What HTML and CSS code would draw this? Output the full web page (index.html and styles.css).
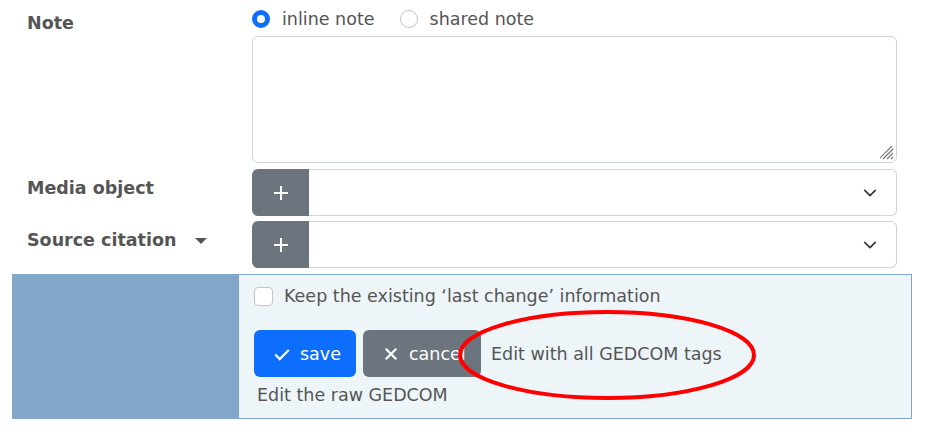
FILE: index.html
```html
<!DOCTYPE html>
<html>
<head>
<meta charset="utf-8">
<link rel="stylesheet" href="styles.css">
</head>
<body>
<div class="page">
  <div class="row row-note">
    <div class="label">Note</div>
    <div class="control">
      <div class="radios">
        <label class="radio"><span class="radio-dot checked"></span>inline note</label>
        <label class="radio"><span class="radio-dot"></span>shared note</label>
      </div>
      <div class="textarea">
        <svg class="grip" width="14" height="14" viewBox="0 0 14 14"><path d="M13 3 L3 13 M13 7 L7 13 M13 11 L11 13 M13 -1 L-1 13" stroke="#777" stroke-width="1.2"/></svg>
      </div>
    </div>
  </div>
  <div class="row row-select">
    <div class="label">Media object</div>
    <div class="control">
      <div class="input-group">
        <div class="plus"><svg width="16" height="16" viewBox="0 0 16 16"><path d="M8 1v14M1 8h14" stroke="#fff" stroke-width="2"/></svg></div>
        <div class="select"><svg width="14" height="14" viewBox="0 0 16 16"><path d="M2 5l6 6 6-6" fill="none" stroke="#343a40" stroke-width="2" stroke-linecap="round" stroke-linejoin="round"/></svg></div>
      </div>
    </div>
  </div>
  <div class="row row-select">
    <div class="label">Source citation <span class="caret"></span></div>
    <div class="control">
      <div class="input-group">
        <div class="plus"><svg width="16" height="16" viewBox="0 0 16 16"><path d="M8 1v14M1 8h14" stroke="#fff" stroke-width="2"/></svg></div>
        <div class="select"><svg width="14" height="14" viewBox="0 0 16 16"><path d="M2 5l6 6 6-6" fill="none" stroke="#343a40" stroke-width="2" stroke-linecap="round" stroke-linejoin="round"/></svg></div>
      </div>
    </div>
  </div>
  <div class="footer">
    <div class="footer-side"></div>
    <div class="footer-main">
      <label class="check"><span class="checkbox"></span>Keep the existing ‘last change’ information</label>
      <div class="buttons">
        <span class="btn btn-save"><svg width="18" height="18" viewBox="0 0 16 16"><path d="M2 8.5l4 4 8-8" fill="none" stroke="#fff" stroke-width="2"/></svg>save</span>
        <span class="btn btn-cancel"><svg width="14" height="14" viewBox="0 0 16 16"><path d="M2 2l12 12M14 2L2 14" fill="none" stroke="#fff" stroke-width="2.6"/></svg>cancel</span>
        <span class="link link-all">Edit with all GEDCOM tags</span>
      </div>
      <div class="link link-raw">Edit the raw GEDCOM</div>
      <svg class="annot" width="310" height="96" viewBox="0 0 310 96"><ellipse cx="150" cy="46" rx="147" ry="43" fill="none" stroke="#ff0000" stroke-width="4"/></svg>
    </div>
  </div>
</div>
</body>
</html>
```
FILE: styles.css
```css
* { box-sizing: border-box; }
html, body { margin: 0; padding: 0; background: #fff; }
body {
  font-family: "DejaVu Sans", Verdana, sans-serif;
  font-size: 17.5px;
  color: #555;
}
.page { padding: 8px 15px 0 12px; width: 927px; }
.row { display: grid; grid-template-columns: 226px 1fr; }
.row-select { margin-top: 6px; }
.row-select + .row-select { margin-top: 5px; }
.label {
  padding-left: 15px;
  font-weight: bold;
  font-size: 17.5px;
  color: #555;
}
.row-note .label { padding-top: 5px; }
.row-select .label { padding-top: 9px; }
.control { padding-left: 14px; padding-right: 15px; }
.radios { display: flex; gap: 12px; height: 22px; align-items: center; }
.radio { display: flex; align-items: center; gap: 12px; color: #555; margin-right: 13px; }
.radio-dot {
  width: 18px; height: 18px; border-radius: 50%;
  border: 1px solid #bfc5cb; background: #fff; flex: none;
}
.radio-dot.checked { border: 5px solid #0d6efd; background: #fff; }
.textarea {
  margin-top: 6px;
  height: 127px;
  border: 1px solid #ced4da;
  border-radius: 6px;
  position: relative;
}
.grip { position: absolute; right: 2px; bottom: 2px; }
.input-group { display: flex; height: 47px; }
.plus {
  width: 57px; background: #6c757d;
  border-radius: 6px 0 0 6px;
  display: flex; align-items: center; justify-content: center;
  padding-top: 1px;
}
.select {
  flex: 1; border: 1px solid #ced4da; border-left: none;
  border-radius: 0 6px 6px 0;
  display: flex; align-items: center; justify-content: flex-end;
  padding-right: 19px;
}
.caret {
  display: inline-block; width: 0; height: 0;
  border-left: 6px solid transparent; border-right: 6px solid transparent;
  border-top: 6px solid #555;
  margin-left: 12px; vertical-align: middle;
}
.footer {
  display: grid; grid-template-columns: 226px 1fr;
  margin-top: 6px;
  height: 145px;
}
.footer-side { background: #81a7cb; }
.footer-main {
  background: #edf5f9;
  border: 1px solid #7fa6ca;
  padding: 10px 15px 0 15px;
  position: relative;
}
.check { display: flex; align-items: center; gap: 11px; height: 22px; color: #555; }
.checkbox {
  width: 19px; height: 19px; border: 1px solid #bfc5cb; border-radius: 4px; background: #fff; flex: none;
}
.buttons { display: flex; align-items: center; margin-top: 23px; gap: 7px; }
.btn {
  height: 47px; display: flex; align-items: center; gap: 9px;
  color: #fff; border-radius: 6px; font-size: 17.5px;
}
.btn-save { background: #0d6efd; width: 102px; padding-left: 19px; }
.btn-cancel { background: #6c757d; width: 118px; padding-left: 21px; gap: 11px; overflow: hidden; white-space: nowrap; }
.link { color: #555; font-size: 17.5px; }
.link-all { margin-left: 3px; }
.link-raw { margin-top: 8px; padding-left: 3px; }
.annot { position: absolute; left: 218px; top: 34px; }
```
